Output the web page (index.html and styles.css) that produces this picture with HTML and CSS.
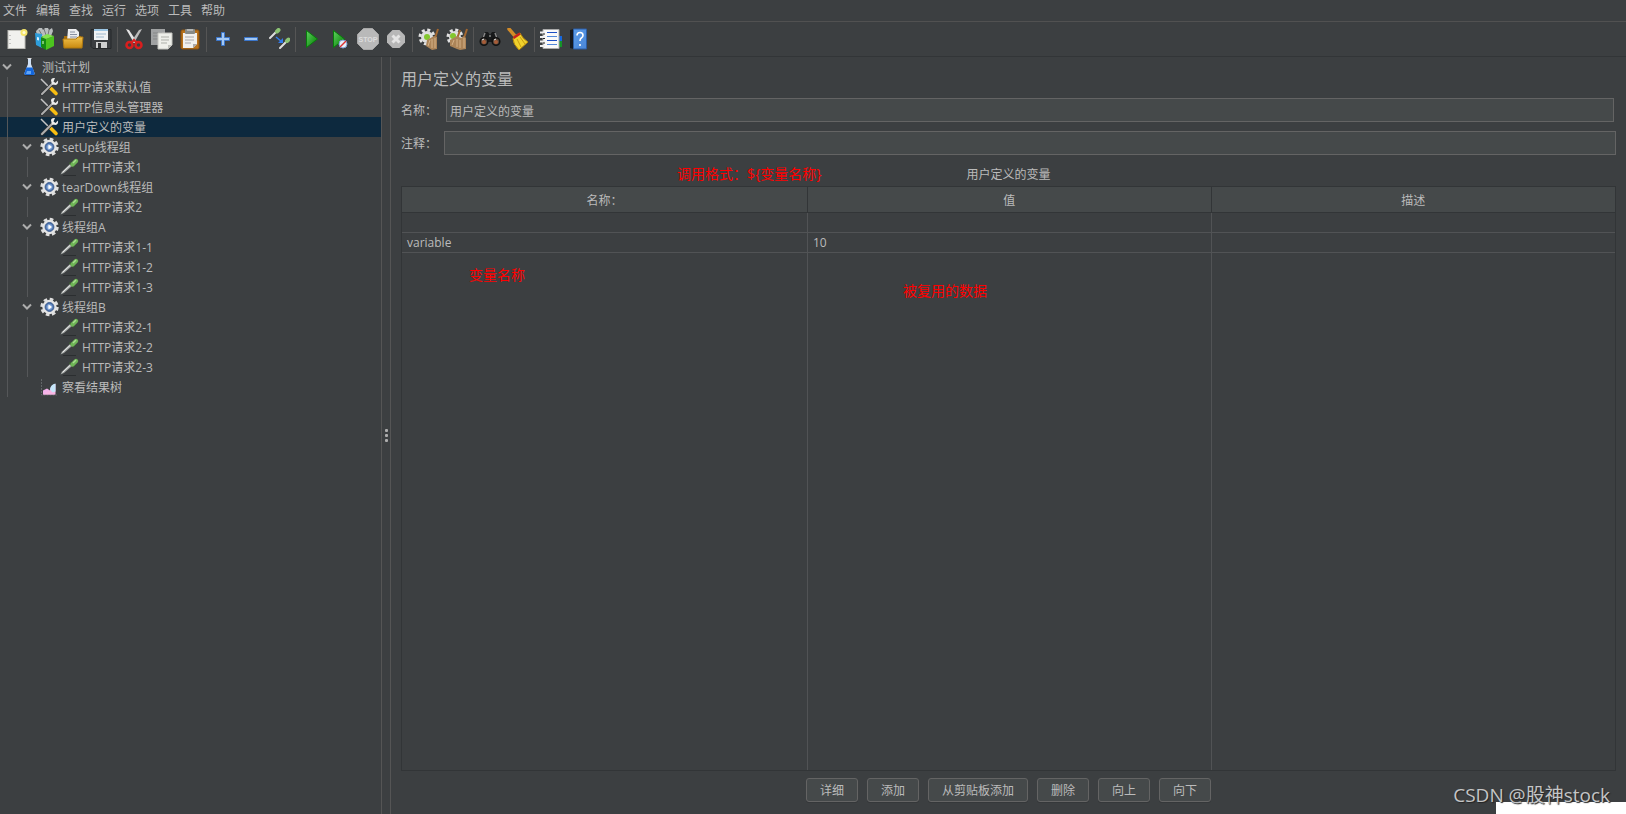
FILE: index.html
```html
<!DOCTYPE html>
<html lang="zh-CN">
<head>
<meta charset="utf-8">
<title>用户定义的变量</title>
<link rel="stylesheet" href="styles.css">
</head>
<body>
<svg class="defs" aria-hidden="true">
  <defs>
    <linearGradient id="g-green" x1="0" y1="0" x2="1" y2="1"><stop offset="0" stop-color="#5fd35f"/><stop offset="1" stop-color="#007a00"/></linearGradient>
    <linearGradient id="g-gold" x1="0" y1="0" x2="0" y2="1"><stop offset="0" stop-color="#f2c14a"/><stop offset="1" stop-color="#c98a10"/></linearGradient>
    <radialGradient id="g-blue"><stop offset="0" stop-color="#dfe9f7"/><stop offset=".5" stop-color="#7fa3d6"/><stop offset="1" stop-color="#2d5596"/></radialGradient>
    <linearGradient id="g-book" x1="0" y1="0" x2="1" y2="1"><stop offset="0" stop-color="#5a9be8"/><stop offset="1" stop-color="#4a86d8"/></linearGradient>
  </defs>
  <symbol id="chevron" viewBox="0 0 10 10"><path d="M1 2.500L5 6.500L9 2.500" fill="none" stroke="#adadad" stroke-width="2"/></symbol>
  <symbol id="flask" viewBox="0 0 20 20"><ellipse cx="9.500" cy="18" rx="6" ry="1.200" fill="#2c2f31"/><path d="M8 1h3v6l3.500 9q.5 2-2 2h-6q-2.500 0-2-2L8 7z" fill="#cfe0f5"/><path d="M6.500 10.500h6l2 5.500q.5 2-2 2h-6q-2.500 0-2-2z" fill="#1467dc"/><path d="M7 14h4v3H6z" fill="#62a5f5"/><path d="M7.500 1.500h4" stroke="#dedede"/></symbol>
  <symbol id="tools" viewBox="0 0 20 20"><path d="M1 2L10 11" stroke="#c4c4c4" stroke-width="1.500"/><path d="M10.500 11L16 16.500" stroke="#f7bd12" stroke-width="3.600" stroke-linecap="round"/><path d="M2 17L12.500 6.500" stroke="#303336" stroke-width="3.400" stroke-linecap="round"/><path d="M2 17L12.500 6.500" stroke="#b0b0b0" stroke-width="2" stroke-linecap="round"/><path d="M15 1q-4-.5-4 2.500l1 4 4 .5q2.500-1 2-4.500L15.500 6l-2-1.500z" fill="#ececec"/></symbol>
  <symbol id="gear" viewBox="0 0 20 20"><circle cx="9.500" cy="10" r="7.800" fill="none" stroke="#dedede" stroke-width="2.800" stroke-dasharray="3.600 2.526"/><circle cx="9.500" cy="10" r="7.200" fill="#e4e4e4"/><circle cx="9.500" cy="10" r="4.400" fill="url(#g-blue)" stroke="#3f5f91"/><path d="M8.500 7.500L12 10L8.500 12.500z" fill="#fff"/></symbol>
  <symbol id="dropper" viewBox="0 0 20 20"><path d="M3 18.500h13" stroke="#2b2e30"/><path d="M.5 17.500L2 14.500L10 7l2 2L4 16z" fill="#9fa3a1"/><path d="M2.500 15.500L10.500 8" stroke="#f4f4f4"/><path d="M9.500 5.500l4.500 4.500" stroke="#3b5a30" stroke-width="1.800"/><path d="M12.500 7.500L16 4" stroke="#6fb557" stroke-width="4.400" stroke-linecap="round"/><path d="M13 6L16 3" stroke="#a9dc92" stroke-width="1.500"/></symbol>
  <symbol id="chart" viewBox="0 0 20 20"><path d="M1.500 2v16H17" fill="none" stroke="#626668" stroke-dasharray="2 1"/><path d="M3 17.500v-4l4-2 3 2 5 4z" fill="#f4b3ec"/><path d="M15.500 7v10.500H3l7-4q0-5 5.500-6.500z" fill="#f9b6e4"/><path d="M15.500 6.500v8l-3 1-2.500-3q.5-5 5.500-6z" fill="#c5e6fa"/></symbol>
</svg>

<nav class="menubar" aria-label="菜单">
  <button>文件</button><button>编辑</button><button>查找</button><button>运行</button><button>选项</button><button>工具</button><button>帮助</button>
</nav>

<div class="toolbar" role="toolbar" aria-label="工具栏">
  <button aria-label="新建"><svg viewBox="0 0 22 22"><rect x="2" y="2.500" width="17" height="18" fill="#f1f1ee" stroke="#bdbdb8"/><path d="M4 7v1m0 3v1m0 3v1" stroke="#999"/><circle cx="18" cy="4.500" r="3.500" fill="#f5e56b"/><circle cx="18" cy="4.500" r="1.500" fill="#fffbd8"/></svg></button>
  <button aria-label="模板"><svg viewBox="0 0 22 22"><path d="M2 3l3-3h3l1 2 2-2h3l1 2 3-2 1 3-2 5H3z" fill="#b9bdbe"/><path d="M5 2l3 5m2-6l2 6m3-5l-1 5" stroke="#777" /><path d="M1 5l7 1v14l-6-3z" fill="#2d9ddb"/><path d="M3 9l2 .5v3L3 12z" fill="#d8f0ff"/><path d="M7 9l5 2v11l-5-3z" fill="#168a12"/><path d="M12 11l8-3v10l-8 4z" fill="#4cc41f"/><path d="M12 11L7 9l6-3 7 2z" fill="#84e34e"/><path d="M9 13v3" stroke="#d9ffd0"/></svg></button>
  <button aria-label="打开"><svg viewBox="0 0 22 22"><path d="M2 8h17l1 12H2z" fill="#a66d0b"/><path d="M6 1h8l3 3v9H5z" fill="#ecedf0"/><path d="M8 4h5m-5 2.500h7m-7 2.500h7" stroke="#8890a0"/><path d="M1 11h13l2-2h5l-1 11H2z" fill="url(#g-gold)" stroke="#b17a11"/></svg></button>
  <button aria-label="保存"><svg viewBox="0 0 22 22"><path d="M1 1.500h20v19H3l-2-2z" fill="#3a3d40" stroke="#25282a"/><path d="M4 1h14v11H4z" fill="#f1f3f5"/><path d="M4 1h14v2H4z" fill="#9cc6e4"/><path d="M6 6h10M6 9h8" stroke="#9fb9ce"/><path d="M6 14h11v6H6z" fill="#cfd0d0"/><path d="M8 15h3v5H8z" fill="#303234"/></svg></button>
  <span class="sep"></span>
  <button aria-label="剪切"><svg viewBox="0 0 22 22"><path d="M3 1l3 1 8 12-3 1z" fill="#e4e4e4"/><path d="M19 1l-3 1-8 12 3 1z" fill="#bcbcbc"/><circle cx="6.500" cy="17" r="3" fill="none" stroke="#d81e1e" stroke-width="2.500"/><circle cx="15.500" cy="17" r="3" fill="none" stroke="#d81e1e" stroke-width="2.500"/><path d="M8 15l3-3 3 3" fill="none" stroke="#d81e1e" stroke-width="2"/></svg></button>
  <button aria-label="复制"><svg viewBox="0 0 22 22"><path d="M0 1h14v16H0z" fill="#a0a2a3"/><path d="M2 5h9M2 8h9M2 11h9" stroke="#858787"/><path d="M7 5h14v12l-4 4H7z" fill="#eeefea" stroke="#c4c5c0"/><path d="M10 9h8m-8 3h8m-8 3h6" stroke="#adafa9"/><path d="M17 21v-4h4z" fill="#bfc0bb"/></svg></button>
  <button aria-label="粘贴"><svg viewBox="0 0 22 22"><rect x="2" y="2" width="18" height="19" rx="1.500" fill="#b8721b" stroke="#8c5411"/><path d="M4 5h14v11l-4 4H4z" fill="#f1f1ee"/><path d="M6 9h9m-9 3h9m-9 3h6" stroke="#aaa"/><path d="M14 20v-4h4z" fill="#aaa"/><rect x="6" y="1" width="10" height="5" rx="1" fill="#888b87"/><path d="M8 2h6" stroke="#ddd"/></svg></button>
  <span class="sep"></span>
  <button aria-label="展开"><svg viewBox="0 0 22 22"><path d="M9.500 4.500h3v5h5v3h-5v5h-3v-5h-5v-3h5z" fill="#a3c8f4" stroke="#3b76cb"/></svg></button>
  <button aria-label="折叠"><svg viewBox="0 0 22 22"><path d="M4.500 9.500h13v3h-13z" fill="#a3c8f4" stroke="#3b76cb"/></svg></button>
  <button aria-label="切换"><svg viewBox="0 0 22 22"><path d="M2 10l7-7M12 20l7-7" stroke="#dedede" stroke-width="2" stroke-linecap="round"/><path d="M9 3.500L10.500 2M19 13l1.500-1.500" stroke="#8cc474" stroke-width="4" stroke-linecap="round"/><path d="M8 9l6 5" stroke="#317bed" stroke-width="1.500"/><path d="M15 10v5h-5z" fill="#317bed"/></svg></button>
  <span class="sep"></span>
  <button aria-label="启动"><svg viewBox="0 0 22 22"><path d="M5.500 2.500L16.500 11L5.500 19.500z" fill="url(#g-green)" stroke="#087b0b"/></svg></button>
  <button aria-label="不停顿开始"><svg viewBox="0 0 22 22"><path d="M4.500 2.500L15.500 11L4.500 19.500z" fill="url(#g-green)" stroke="#087b0b"/><circle cx="14" cy="16" r="4" fill="#e6eef8" stroke="#7d9fd3"/><path d="M11 19l6-6" stroke="#dc3131" stroke-width="1.500"/></svg></button>
  <button aria-label="停止"><svg viewBox="0 0 22 22"><path d="M6.500.5h9l6 6v9l-6 6h-9l-6-6v-9z" fill="#b9b9b9" stroke="#a8a8a8"/><text class="stop-label" x="11" y="14">STOP</text></svg></button>
  <button aria-label="关闭"><svg viewBox="0 0 22 22"><path d="M7.500 2h7L20 7.500v7L14.500 20h-7L2 14.500v-7z" fill="#b7b7b7"/><path d="M7.500 7.500l7 7m0-7l-7 7" stroke="#e4e4e4" stroke-width="3"/></svg></button>
  <span class="sep"></span>
  <button aria-label="清除"><svg viewBox="0 0 22 22"><circle cx="9" cy="9" r="7" fill="none" stroke="#e2e2e2" stroke-width="3" stroke-dasharray="3 2.500"/><circle cx="9" cy="9" r="6" fill="#dedede"/><circle cx="9" cy="9" r="3" fill="#83c72e"/><path d="M20 1l-3 9" stroke="#a3672f" stroke-width="2"/><path d="M9 12l7-4 3 1v12l-5 1-6-4z" fill="#ac8458"/><path d="M12 12l-2 6m4-7v9m3-10v10" stroke="#d4b187"/></svg></button>
  <button aria-label="清除全部"><svg viewBox="0 0 22 22"><circle cx="9" cy="9" r="7" fill="none" stroke="#e2e2e2" stroke-width="3" stroke-dasharray="3 2.500"/><circle cx="9" cy="9" r="6" fill="#dedede"/><circle cx="7" cy="8" r="3" fill="#83c72e"/><path d="M14 2l-3 9M21 1l-3 9" stroke="#a3672f" stroke-width="2"/><path d="M4 12l7-4 4 2 3-2 2 2v11l-6 1-3-1-7-3z" fill="#ac8458"/><path d="M8 12l-2 5m5-6v8m3-7v8m4-10v10" stroke="#d4b187"/></svg></button>
  <span class="sep"></span>
  <button aria-label="查找"><svg viewBox="0 0 22 22"><path d="M3 9l3-5h3l2 3 2-3h3l3 5v5H3z" fill="#17191a"/><path d="M6 5l-2 5m12-5l2 5M10 8h2" stroke="#888" stroke-width="1.500"/><circle cx="5" cy="13.500" r="3.800" fill="#55483e" stroke="#111" stroke-width="1.500"/><circle cx="17" cy="13.500" r="3.800" fill="#55483e" stroke="#111" stroke-width="1.500"/><circle cx="5" cy="14" r="2" fill="#a85c37"/><circle cx="17" cy="14" r="2" fill="#a85c37"/><path d="M3 12l2-1m10 1l2-1" stroke="#eee"/></svg></button>
  <button aria-label="重置查找"><svg viewBox="0 0 22 22"><path d="M2 1l6 7" stroke="#d28b28" stroke-width="3.500" stroke-linecap="round"/><path d="M7 8l6-3q2 5 8 9l-9 8q-6-6-6-11z" fill="#f0d12c" stroke="#b4880c"/><path d="M6.500 10L13 5.500" stroke="#c62020" stroke-width="2.500"/><path d="M10 11l4 8m-1-10l5 7" stroke="#c59c13"/></svg></button>
  <span class="sep"></span>
  <button aria-label="函数助手"><svg viewBox="0 0 22 22"><path d="M18 8h4v5h-4z" fill="#1667dc"/><path d="M18 13h4v6h-4z" fill="#149328"/><path d="M3 1.500h16v19H3z" fill="#f9f9f9" stroke="#aaa"/><path d="M7 4.500h10M7 12.500h10" stroke="#1d4fc4"/><path d="M7 8.500h10M7 16.500h10" stroke="#5287d9"/><path d="M0 4.500h5M0 9h5m-5 4.500h5M0 18h5" stroke="#eee" stroke-width="2"/><path d="M3 6h2m-2 4.500h2m-2 4.500h2" stroke="#222"/></svg></button>
  <button aria-label="帮助"><svg viewBox="0 0 22 22"><path d="M2 2l4-1v20l-4-1z" fill="#16191e"/><path d="M5.500 1h13v20h-13z" fill="url(#g-book)" stroke="#2c5da4"/><path d="M9 7.500q0-3 3-3t3 2.700q0 1.800-1.700 2.800-1.300.8-1.300 3M12 16v2" fill="none" stroke="#fff" stroke-width="1.600"/></svg></button>
</div>

<div class="workspace">
  <aside class="tree" role="tree" aria-label="测试计划">
    <div class="node" role="treeitem"><span class="toggle"><svg><use href="#chevron"/></svg></span><svg class="icon"><use href="#flask"/></svg><span class="name">测试计划</span></div>
    <div class="node" role="treeitem"><i class="guide"></i><span class="toggle"></span><svg class="icon"><use href="#tools"/></svg><span class="name">HTTP请求默认值</span></div>
    <div class="node" role="treeitem"><i class="guide"></i><span class="toggle"></span><svg class="icon"><use href="#tools"/></svg><span class="name">HTTP信息头管理器</span></div>
    <div class="node selected" role="treeitem" aria-selected="true"><i class="guide"></i><span class="toggle"></span><svg class="icon"><use href="#tools"/></svg><span class="name">用户定义的变量</span></div>
    <div class="node" role="treeitem"><i class="guide"></i><span class="toggle"><svg><use href="#chevron"/></svg></span><svg class="icon"><use href="#gear"/></svg><span class="name">setUp线程组</span></div>
    <div class="node" role="treeitem"><i class="guide"></i><i class="guide"></i><i class="space"></i><svg class="icon"><use href="#dropper"/></svg><span class="name">HTTP请求1</span></div>
    <div class="node" role="treeitem"><i class="guide"></i><span class="toggle"><svg><use href="#chevron"/></svg></span><svg class="icon"><use href="#gear"/></svg><span class="name">tearDown线程组</span></div>
    <div class="node" role="treeitem"><i class="guide"></i><i class="guide"></i><i class="space"></i><svg class="icon"><use href="#dropper"/></svg><span class="name">HTTP请求2</span></div>
    <div class="node" role="treeitem"><i class="guide"></i><span class="toggle"><svg><use href="#chevron"/></svg></span><svg class="icon"><use href="#gear"/></svg><span class="name">线程组A</span></div>
    <div class="node" role="treeitem"><i class="guide"></i><i class="guide"></i><i class="space"></i><svg class="icon"><use href="#dropper"/></svg><span class="name">HTTP请求1-1</span></div>
    <div class="node" role="treeitem"><i class="guide"></i><i class="guide"></i><i class="space"></i><svg class="icon"><use href="#dropper"/></svg><span class="name">HTTP请求1-2</span></div>
    <div class="node" role="treeitem"><i class="guide"></i><i class="guide"></i><i class="space"></i><svg class="icon"><use href="#dropper"/></svg><span class="name">HTTP请求1-3</span></div>
    <div class="node" role="treeitem"><i class="guide"></i><span class="toggle"><svg><use href="#chevron"/></svg></span><svg class="icon"><use href="#gear"/></svg><span class="name">线程组B</span></div>
    <div class="node" role="treeitem"><i class="guide"></i><i class="guide"></i><i class="space"></i><svg class="icon"><use href="#dropper"/></svg><span class="name">HTTP请求2-1</span></div>
    <div class="node" role="treeitem"><i class="guide"></i><i class="guide"></i><i class="space"></i><svg class="icon"><use href="#dropper"/></svg><span class="name">HTTP请求2-2</span></div>
    <div class="node" role="treeitem"><i class="guide"></i><i class="guide"></i><i class="space"></i><svg class="icon"><use href="#dropper"/></svg><span class="name">HTTP请求2-3</span></div>
    <div class="node" role="treeitem"><i class="guide"></i><span class="toggle"></span><svg class="icon"><use href="#chart"/></svg><span class="name">察看结果树</span></div>
  </aside>

  <div class="splitter"><i></i><i></i><i></i></div>

  <main class="editor">
    <h1>用户定义的变量</h1>
    <div class="field field-name"><label for="name">名称：</label><input id="name" type="text" value="用户定义的变量"></div>
    <div class="field"><label for="comment">注释：</label><input id="comment" type="text"></div>
    <section class="variables">
      <h2>用户定义的变量</h2>
      <div class="grid">
        <table>
          <thead><tr><th>名称：</th><th>值</th><th>描述</th></tr></thead>
          <tbody>
            <tr class="row"><td></td><td></td><td></td></tr>
            <tr class="row"><td>variable</td><td>10</td><td></td></tr>
            <tr><td></td><td></td><td></td></tr>
          </tbody>
        </table>
      </div>
      <span class="note note-format">调用格式：${变量名称}</span>
      <span class="note note-name">变量名称</span>
      <span class="note note-value">被复用的数据</span>
    </section>
    <div class="actions">
      <button>详细</button><button>添加</button><button>从剪贴板添加</button><button>删除</button><button>向上</button><button>向下</button>
    </div>
  </main>
</div>
<div class="corner"></div>
<div class="watermark">CSDN @股神stock</div>
</body>
</html>
```

FILE: styles.css
```css
* { box-sizing: border-box; }

body {
  margin: 0;
  height: 100vh;
  display: flex;
  flex-direction: column;
  overflow: hidden;
  background: #3c3f41;
  color: #bbbbbb;
  font: 12px/16px "Open Sans", "Noto Sans CJK SC", sans-serif;
}

button, input { font: inherit; color: inherit; }

.defs { position: absolute; width: 0; height: 0; }

.menubar {
  display: flex;
  gap: 9px;
  height: 22px;
  padding: 1px 3px 0;
  border-bottom: 1px solid #515151;
}

.menubar button { padding: 0; border: 0; background: none; }

.toolbar {
  display: flex;
  align-items: center;
  height: 35px;
  padding: 0 3px;
  border-bottom: 1px solid #323537;
}

.toolbar button {
  display: flex;
  width: 28px;
  padding: 3px;
  border: 0;
  background: none;
}

.toolbar svg { width: 22px; height: 22px; }

.sep {
  width: 5px;
  height: 25px;
  background: linear-gradient(#555555, #555555) center / 1px 100% no-repeat;
}

.stop-label {
  font: bold 7px "Liberation Sans", sans-serif;
  fill: #dddddd;
  text-anchor: middle;
}

.workspace { display: flex; flex: 1; min-height: 0; }

.tree { flex: 0 0 381px; overflow: hidden; }

.node { display: flex; align-items: center; height: 20px; white-space: nowrap; }

.node.selected { background: #0d293e; }

.name { padding-top: 2px; }

.toggle { display: flex; width: 20px; padding-left: 2px; }

.toggle svg { width: 10px; height: 10px; }

.guide {
  width: 20px;
  height: 20px;
  background: linear-gradient(#555759, #555759) 7px 0 / 1px 100% no-repeat;
}

.space { width: 20px; }

.icon { width: 20px; height: 20px; margin-right: 2px; }

.splitter {
  display: flex;
  flex: 0 0 10px;
  flex-direction: column;
  align-items: center;
  justify-content: center;
  gap: 2px;
  border: solid #555555;
  border-width: 0 1px;
}

.splitter i { width: 3px; height: 3px; border-radius: 1px; background: #adadad; }

.editor {
  display: flex;
  flex: 1;
  flex-direction: column;
  min-width: 0;
  padding: 10px 10px 12px;
}

h1 { margin: 0 0 7px; font-size: 16px; line-height: 24px; font-weight: 400; }

.field { display: flex; align-items: center; margin-bottom: 9px; }

.field label { width: 43px; padding-top: 2px; }

.field input {
  flex: 1;
  min-width: 0;
  height: 24px;
  padding: 2px 3px 0;
  border: 1px solid #646464;
  background: #45494a;
  outline: 0;
}

.field-name { padding-right: 2px; }

.field-name label { width: 45px; }

.variables {
  position: relative;
  display: flex;
  flex: 1;
  flex-direction: column;
  min-height: 0;
}

h2 {
  margin: 0;
  padding: 2px 0;
  font-size: 12px;
  line-height: 18px;
  font-weight: 400;
  text-align: center;
}

.grid { flex: 1; min-height: 0; border: 1px solid #323537; }

table { width: 100%; height: 100%; table-layout: fixed; border-collapse: separate; border-spacing: 0; }

th {
  height: 26px;
  padding: 2px 0 0;
  border-right: 1px solid #323537;
  border-bottom: 1px solid #323537;
  background: #45494a;
  font-weight: 400;
}

th:first-child { width: 406px; }

td { padding: 0 5px; border-right: 1px solid #515355; }

th:last-child, td:last-child { border-right: 0; }

.row td { height: 20px; border-bottom: 1px solid #515355; }

.note { position: absolute; color: #ff0000; font-size: 14px; line-height: 20px; white-space: nowrap; }

.note-format { left: 276px; top: 0; }

.note-name { left: 68px; top: 101px; }

.note-value { left: 502px; top: 117px; }

.actions { display: flex; justify-content: center; gap: 9px; margin-top: 7px; }

.actions button {
  min-width: 52px;
  height: 24px;
  padding: 2px 13px 0;
  border: 1px solid #646464;
  border-radius: 3px;
  background: #45494a;
  box-shadow: 0 1px 0 #35383a;
}

.corner { position: absolute; right: 0; bottom: 0; width: 130px; height: 12px; background: #ffffff; }

.watermark {
  position: absolute;
  right: 16px;
  bottom: 5px;
  color: #c4c5c6;
  font-size: 19px;
  line-height: 28px;
  text-shadow: 1px 1px 1px #222222;
}
```
